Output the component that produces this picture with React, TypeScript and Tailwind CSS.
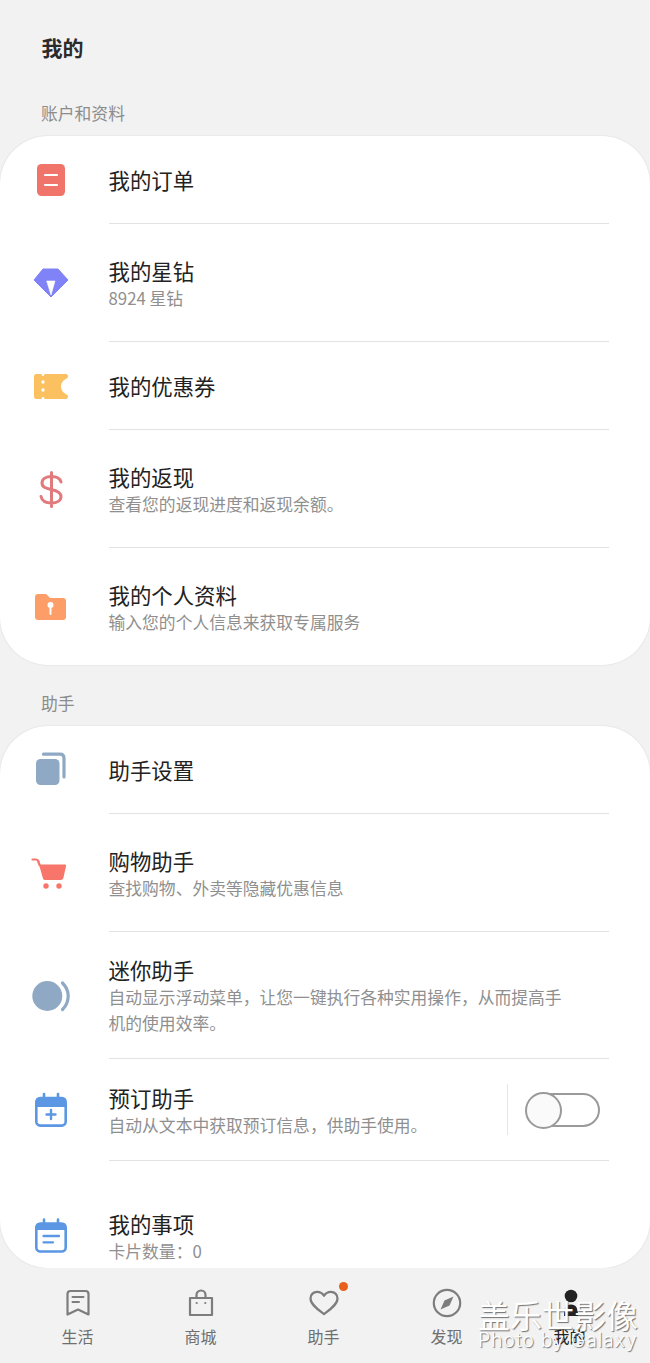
import React from "react";

const F = "font-['Noto_Sans_CJK_SC','Noto_Sans',sans-serif]";

const Svg = ({ children }: { children: React.ReactNode }) => (
  <svg width="36" height="36" viewBox="0 0 36 36" fill="none" className="overflow-visible">
    {children}
  </svg>
);

const icons = {
  order: (
    <Svg>
      <rect x="4" y="2" width="28" height="32" rx="4.5" fill="#f0746a" />
      <path d="M12 13H24M12 23H24" stroke="#fff" strokeWidth="2.2" strokeLinecap="round" />
    </Svg>
  ),
  gem: (
    <Svg>
      <path d="M10 4H25L35 15L18 32L1 15Z" fill="#7f83f7" stroke="#7f83f7" strokeWidth="1" strokeLinejoin="round" />
      <path d="M13.7 16H22L18 30Z" fill="#fff" stroke="#fff" strokeWidth="0.6" strokeLinejoin="round" />
    </Svg>
  ),
  ticket: (
    <Svg>
      <path
        d="M3 6H8.5C8.7 7.5 9.3 8 10 8C10.7 8 11.3 7.5 11.5 6H33C34.5 6 35 7 35 8.5C35 9.5 34 10.5 32 11.5C29.5 13 28 15.5 28 18.5C28 21.5 29.5 24 32 25.5C34 26.5 35 27.5 35 28.5C35 30 34.5 31 33 31H11.5C11.3 29.5 10.7 29 10 29C9.3 29 8.7 29.5 8.5 31H3C2 31 1 30 1 28.5V8.5C1 7 2 6 3 6Z"
        fill="#fbc05f"
      />
      <circle cx="10" cy="14" r="1.7" fill="#fff" />
      <circle cx="10" cy="22" r="1.7" fill="#fff" />
    </Svg>
  ),
  dollar: (
    <Svg>
      <path
        d="M28 11C27 7 23 5.5 18.5 5.5C13 5.5 9 8 9 12C9 16.5 13.5 17.5 18 18.5C23 19.5 28 21 28 25.5C28 29.5 24 32 18.5 32C13 32 9 30 8 25.5M18.5 1.5V35.5"
        stroke="#e07a7c"
        strokeWidth="3"
        strokeLinecap="round"
      />
    </Svg>
  ),
  folder: (
    <Svg>
      <path
        d="M5 5H12C13 5 13.6 5.4 14.2 6L17 9H30C31.8 9 33 10.2 33 12V28C33 29.8 31.8 31 30 31H5C3.2 31 2 29.8 2 28V8C2 6.2 3.2 5 5 5Z"
        fill="#fd9d68"
      />
      <circle cx="17.5" cy="16" r="3" fill="#fff" />
      <path d="M17.5 17V25" stroke="#fff" strokeWidth="2" strokeLinecap="round" />
    </Svg>
  ),
  copy: (
    <Svg>
      <rect x="3" y="7" width="23.5" height="26" rx="4.5" fill="#8fa9c4" />
      <path d="M10.5 2.2H27C29.5 2.2 31 3.7 31 6.2V25" stroke="#8fa9c4" strokeWidth="3.2" strokeLinecap="round" />
    </Svg>
  ),
  cart: (
    <Svg>
      <path d="M-0.5 4.5H3C4.5 4.5 5 5 5.5 6.5" stroke="#f7756a" strokeWidth="2.2" strokeLinecap="round" />
      <path
        d="M6 9.5H32C33 9.5 33.3 10.3 33 11.2L30.5 22.5C30.2 24 29.2 25 28 25H12C10.5 25 10 24 9.7 22.5Z"
        fill="#f7756a"
      />
      <path d="M5 6L7 11" stroke="#f7756a" strokeWidth="2.2" />
      <circle cx="13" cy="31" r="2.7" fill="#f7756a" />
      <circle cx="26" cy="31" r="2.7" fill="#f7756a" />
    </Svg>
  ),
  mini: (
    <Svg>
      <circle cx="14.3" cy="18" r="15" fill="#8fa9c4" />
      <path d="M29.5 5C33.5 9 35.2 13 35.2 18C35.2 23 33.5 27.5 29.5 31.5" stroke="#8fa9c4" strokeWidth="3.2" strokeLinecap="round" />
    </Svg>
  ),
  calPlus: (
    <Svg>
      <path d="M6 5.5H30C32 5.5 33 6.8 33 8.5V15H3V8.5C3 6.8 4 5.5 6 5.5Z" fill="#5b97e3" />
      <rect x="3.3" y="6" width="29.4" height="27.6" rx="4" stroke="#5b97e3" strokeWidth="2.6" />
      <path d="M11 2V6M25 2V6" stroke="#5b97e3" strokeWidth="2.6" strokeLinecap="round" />
      <path d="M18 18V27M13.5 22.5H22.5" stroke="#5b97e3" strokeWidth="2.4" strokeLinecap="round" />
    </Svg>
  ),
  calList: (
    <Svg>
      <path d="M6 5H30C32 5 33 6.3 33 8V12H3V8C3 6.3 4 5 6 5Z" fill="#5b97e3" />
      <rect x="3.3" y="5.5" width="29.4" height="28" rx="4" stroke="#5b97e3" strokeWidth="2.6" />
      <path d="M11 1.5V5.5M25 1.5V5.5" stroke="#5b97e3" strokeWidth="2.6" strokeLinecap="round" />
      <path d="M10.5 18H26M10.5 24.3H20" stroke="#5b97e3" strokeWidth="2.3" strokeLinecap="round" />
    </Svg>
  ),
};

type RowProps = {
  icon: React.ReactNode;
  title: string;
  sub?: React.ReactNode;
  h: string;
  last?: boolean;
  toggle?: boolean;
};

const Row = ({ icon, title, sub, h, last, toggle }: RowProps) => (
  <div className={`flex ${h}`}>
    <div className="flex w-[109px] shrink-0 items-center pl-[33px]">{icon}</div>
    <div className={`mr-[41px] flex flex-1 items-center ${last ? "" : "border-b border-[#e3e3e3]"}`}>
      <div className={`-ml-[0.5px] flex-1 ${sub ? "pt-[2px]" : ""}`}>
        <div className="text-[21.4px] leading-[28px] text-[#222222]">{title}</div>
        {sub && <div className="text-[16.8px] leading-[26px] text-[#8f8f8f]">{sub}</div>}
      </div>
      {toggle && (
        <div className="flex h-[51px] items-center border-l border-[#e6e6e6] pl-[18px] pr-[9px]">
          <div className="relative h-[34px] w-[74px] rounded-full border-2 border-[#9a9a9a] bg-white">
            <div className="absolute -left-[3px] -top-[3px] h-[37px] w-[37px] rounded-full border-2 border-[#9a9a9a] bg-[#fafafa]" />
          </div>
        </div>
      )}
    </div>
  </div>
);

const NavItem = ({ icon, label, dark }: { icon: React.ReactNode; label: string; dark?: boolean }) => (
  <div className="relative flex flex-1 flex-col items-center">
    <div className="flex h-[36px] w-[36px] items-center justify-center">{icon}</div>
    <div className={`mt-[3px] text-[16px] leading-[24px] ${dark ? "text-[#222222]" : "text-[#6f6f6f]"}`}>{label}</div>
  </div>
);

const stroke = { stroke: "#7d7d7d", strokeWidth: 2.2, strokeLinecap: "round" as const, strokeLinejoin: "round" as const };

export default function App() {
  return (
    <div className={`relative flex h-[1363px] w-[650px] flex-col overflow-hidden bg-[#f2f2f2] ${F}`}>
      <div className="min-h-0 flex-1 overflow-hidden">
        <div className="flex h-[96px] items-center pl-[41.5px] text-[21px] font-bold text-[#2b2b2b]">我的</div>
        <div className="mb-[6px] h-[34px] pl-[41px] text-[16.8px] leading-[34px] text-[#8c8c8c]">账户和资料</div>
        <div className="overflow-hidden rounded-[48px] bg-white shadow-[0_0_2px_rgba(0,0,0,0.12)]">
          <Row h="h-[88px]" icon={icons.order} title="我的订单" />
          <Row h="h-[118px]" icon={icons.gem} title="我的星钻" sub="8924 星钻" />
          <Row h="h-[88px]" icon={icons.ticket} title="我的优惠券" />
          <Row h="h-[118px]" icon={icons.dollar} title="我的返现" sub="查看您的返现进度和返现余额。" />
          <Row h="h-[117px]" last icon={icons.folder} title="我的个人资料" sub="输入您的个人信息来获取专属服务" />
        </div>
        <div className="mb-[6px] mt-[21px] h-[34px] pl-[41px] text-[16.8px] leading-[34px] text-[#8c8c8c]">助手</div>
        <div className="h-[542px] overflow-hidden rounded-[48px] bg-white shadow-[0_0_2px_rgba(0,0,0,0.12)]">
          <Row h="h-[88px]" icon={icons.copy} title="助手设置" />
          <Row h="h-[118px]" icon={icons.cart} title="购物助手" sub="查找购物、外卖等隐藏优惠信息" />
          <Row
            h="h-[127px]"
            icon={icons.mini}
            title="迷你助手"
            sub={
              <>
                {"自动显示浮动菜单\uFF0C让您一键执行各种实用操作\uFF0C从而提高手"}
                <br />
                机的使用效率。
              </>
            }
          />
          <Row h="h-[102px]" toggle icon={icons.calPlus} title="预订助手" sub={"自动从文本中获取预订信息\uFF0C供助手使用。"} />
          <Row h="h-[150px]" last icon={icons.calList} title="我的事项" sub={"卡片数量\uFF1A0"} />
        </div>
      </div>

      <div className="flex h-[95px] shrink-0 pl-[16px] pr-[19px] pt-[17px]">
        <NavItem
          label="生活"
          icon={
            <svg width="26" height="28" viewBox="0 0 26 28" fill="none">
              <path d="M2.5 5C2.5 3 3.5 2 5.5 2H20.5C22.5 2 23.5 3 23.5 5V25.5L13 20.5L2.5 25.5Z" {...stroke} />
              <path d="M7.5 8H18.5M7.5 13H14" {...stroke} strokeWidth={2} />
            </svg>
          }
        />
        <NavItem
          label="商城"
          icon={
            <svg width="26" height="28" viewBox="0 0 26 28" fill="none">
              <path d="M2 9H24V26H2Z" {...stroke} />
              <path d="M8.5 9V6C8.5 3.2 10.5 1.5 13 1.5C15.5 1.5 17.5 3.2 17.5 6V9" {...stroke} />
              <circle cx="8.7" cy="14" r="1.1" fill="#7d7d7d" />
              <circle cx="17.3" cy="14" r="1.1" fill="#7d7d7d" />
            </svg>
          }
        />
        <div className="relative flex flex-1 flex-col items-center">
          <div className="flex h-[36px] w-[36px] items-center justify-center">
            <svg width="30" height="26" viewBox="0 0 30 26" fill="none">
              <path d="M15 24C9 19.5 1.5 14.5 1.5 8.5C1.5 4.5 4.5 1.8 8 1.8C10.8 1.8 13.5 3.2 15 5.8C16.5 3.2 19.2 1.8 22 1.8C25.5 1.8 28.5 4.5 28.5 8.5C28.5 14.5 21 19.5 15 24Z" {...stroke} />
            </svg>
          </div>
          <div className="mt-[3px] text-[16px] leading-[24px] text-[#6f6f6f]">助手</div>
          <div className="absolute left-[77px] -top-[3px] h-[9px] w-[9px] rounded-full bg-[#e8601c]" />
        </div>
        <NavItem
          label="发现"
          icon={
            <svg width="30" height="30" viewBox="0 0 30 30" fill="none">
              <circle cx="15" cy="15" r="13.2" {...stroke} />
              <path d="M21.5 8.5L17.5 17.5L8.5 21.5L12.5 12.5Z" fill="#7d7d7d" />
            </svg>
          }
        />
        <NavItem
          label="我的"
          dark
          icon={
            <svg width="26" height="36" viewBox="0 0 26 36" fill="none">
              <circle cx="14" cy="11" r="6.3" fill="#222222" />
              <path d="M7 31C7 23 9 19.5 14 19.5C19 19.5 21 23 21 31Z" fill="#222222" />
            </svg>
          }
        />
      </div>

      <div className="pointer-events-none absolute left-[478px] top-[1296px] text-white">
        <div className="whitespace-nowrap text-[32px] leading-[36px] [text-shadow:1px_1px_1px_rgba(60,60,60,0.7)]">盖乐世影像</div>
        <div className="whitespace-nowrap font-['Inter',sans-serif] text-[19.5px] font-light leading-[16px] tracking-[0.8px] [text-shadow:1px_1px_1px_rgba(60,60,60,0.7)]">Photo by Galaxy</div>
      </div>
    </div>
  );
}
